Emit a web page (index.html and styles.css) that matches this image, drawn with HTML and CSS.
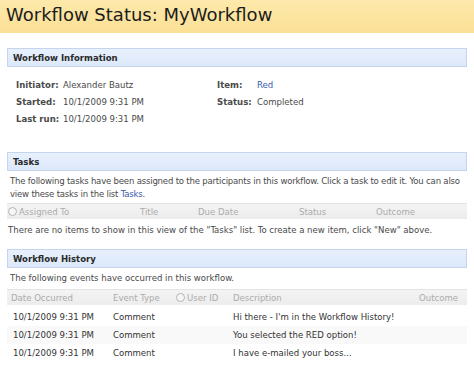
FILE: index.html
```html
<!DOCTYPE html>
<html>
<head>
<meta charset="utf-8">
<link rel="stylesheet" href="styles.css">
</head>
<body>
<header class="title-bar">Workflow Status: MyWorkflow</header>
<main class="content">
  <section class="panel">
    <div class="panel-head">Workflow Information</div>
    <div class="info">
      <div class="info-col">
        <div class="info-row"><span class="label">Initiator:</span><span>Alexander Bautz</span></div>
        <div class="info-row"><span class="label">Started:</span><span>10/1/2009 9:31 PM</span></div>
        <div class="info-row"><span class="label">Last run:</span><span>10/1/2009 9:31 PM</span></div>
      </div>
      <div class="info-col right">
        <div class="info-row"><span class="label">Item:</span><a class="link">Red</a></div>
        <div class="info-row"><span class="label">Status:</span><span>Completed</span></div>
      </div>
    </div>
  </section>

  <section class="panel">
    <div class="panel-head">Tasks</div>
    <p class="desc tight">The following tasks have been assigned to the participants in this workflow. Click a task to edit it. You can also<br>view these tasks in the list <a class="link">Tasks</a>.</p>
    <div class="grid-head tasks-cols">
      <span class="with-icon"><span class="radio"></span>Assigned To</span>
      <span>Title</span>
      <span>Due Date</span>
      <span>Status</span>
      <span>Outcome</span>
    </div>
    <p class="empty">There are no items to show in this view of the "Tasks" list. To create a new item, click "New" above.</p>
  </section>

  <section class="panel">
    <div class="panel-head">Workflow History</div>
    <p class="desc short">The following events have occurred in this workflow.</p>
    <div class="grid-head hist-cols">
      <span>Date Occurred</span>
      <span>Event Type</span>
      <span class="with-icon"><span class="radio"></span>User ID</span>
      <span>Description</span>
      <span class="outcome">Outcome</span>
    </div>
    <div class="hist-row hist-cols first">
      <span class="date">10/1/2009 9:31 PM</span><span>Comment</span><span></span><span>Hi there - I'm in the Workflow History!</span><span></span>
    </div>
    <div class="hist-row hist-cols alt">
      <span class="date">10/1/2009 9:31 PM</span><span>Comment</span><span></span><span>You selected the RED option!</span><span></span>
    </div>
    <div class="hist-row hist-cols">
      <span class="date">10/1/2009 9:31 PM</span><span>Comment</span><span></span><span>I have e-mailed your boss...</span><span></span>
    </div>
  </section>
</main>
</body>
</html>
```

FILE: styles.css
```css
html, body {
  margin: 0;
  padding: 0;
  background: #ffffff;
}
body {
  font-family: "DejaVu Sans Condensed", "DejaVu Sans", sans-serif;
  font-size: 9.5px;
  color: #4a4a4a;
  width: 474px;
  height: 369px;
  overflow: hidden;
}
.title-bar {
  height: 33px;
  box-sizing: border-box;
  padding: 3px 0 0 6px;
  background: linear-gradient(#fde9ab, #fbe096);
  font-family: "DejaVu Sans", sans-serif;
  font-size: 18px;
  line-height: 24px;
  color: #1c1c1c;
}
.content {
  padding: 15px 7px 0 7px;
}
.panel-head {
  height: 19px;
  box-sizing: border-box;
  border: 1px solid #c5d5ee;
  background: linear-gradient(#e8f0fd, #dce8fa);
  font-weight: bold;
  color: #2a2a2a;
  line-height: 17px;
  padding-left: 5px;
}
.info {
  display: flex;
  padding: 9px 0 0 9px;
  height: 85px;
  box-sizing: border-box;
}
.info-col {
  width: 201px;
}
.info-row {
  display: flex;
  height: 17px;
  line-height: 17px;
}
.info-col .label {
  width: 47px;
  font-weight: bold;
}
.info-col.right .label {
  width: 40px;
}
.link {
  color: #3a5dae;
}
.desc {
  margin: 0;
  padding: 3px 0 0 3px;
  line-height: 13px;
  height: 32px;
  box-sizing: border-box;
}
.desc.tight {
  letter-spacing: -0.2px;
  white-space: nowrap;
}
.desc.short {
  height: 21px;
}
.grid-head {
  height: 16px;
  box-sizing: border-box;
  border-top: 1px solid #e3e3e3;
  background: linear-gradient(#f4f4f4, #ececec);
  color: #acacac;
  line-height: 15px;
}
.tasks-cols {
  display: grid;
  grid-template-columns: 133px 58px 101px 77px 1fr;
}
.tasks-cols > span:first-child {
  padding-left: 1px;
}
.with-icon {
  display: flex;
  align-items: center;
  gap: 2px;
}
.radio {
  width: 7px;
  height: 7px;
  border: 1px solid #b4b4b4;
  border-radius: 50%;
  background: #f6f6f6;
}
.empty {
  margin: 0;
  padding: 4px 0 0 1px;
  line-height: 13px;
  height: 30px;
  box-sizing: border-box;
}
.hist-cols {
  display: grid;
  grid-template-columns: 106px 63px 57px 186px 1fr;
}
.grid-head.hist-cols > span:first-child {
  padding-left: 4px;
}
.hist-cols .outcome {
  text-align: right;
  padding-right: 11px;
}
.hist-row {
  height: 18px;
  line-height: 18px;
  color: #333333;
}
.hist-row .date {
  padding-left: 6px;
}
.hist-row.first {
  margin-top: 3px;
}
.hist-row.alt {
  background: #f9f9f9;
}
```
